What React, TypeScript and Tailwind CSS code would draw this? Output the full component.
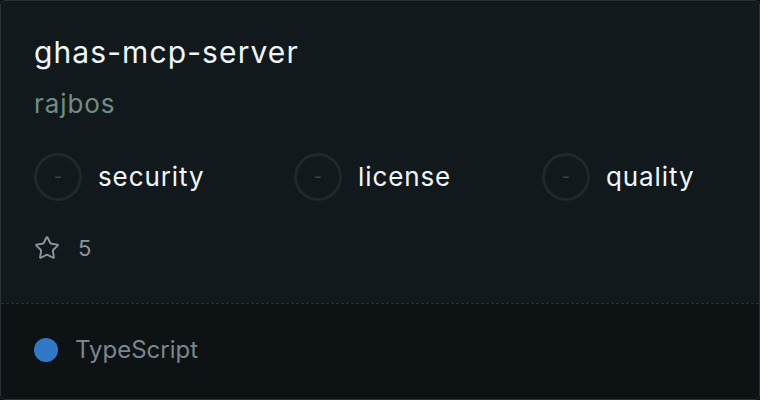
import { Star } from 'lucide-react';

const CHECKS = [
  { label: 'security', width: 'w-[260px]' },
  { label: 'license', width: 'w-[248px]' },
  { label: 'quality', width: '' },
];

export default function App() {
  return (
    <div className="w-[760px] h-[400px] bg-[#0d1215] font-['Inter','Liberation_Sans',sans-serif]">
      <div className="w-full h-full flex flex-col border border-[#2b3236] rounded-[6px] overflow-hidden">
        {/* Header */}
        <div className="flex-1 bg-[#12191c] px-[33px] pt-[33px]">
          <h1 className="text-[30px] leading-[36px] tracking-[1.1px] text-[#f0f6fc]">ghas-mcp-server</h1>
          <p className="mt-[18px] text-[26px] leading-[31px] tracking-[0.9px] text-[#6f8d87]">rajbos</p>

          {/* Checks */}
          <div className="mt-[34px] flex items-center">
            {CHECKS.map(c => (
              <div key={c.label} className={`flex items-center ${c.width}`}>
                <div className="w-[48px] h-[48px] rounded-full border-[3px] border-[#20272b] flex items-center justify-center">
                  <span className="text-[18px] leading-none text-[#3b4448]">-</span>
                </div>
                <span className="ml-[16px] text-[26px] leading-[32px] tracking-[0.9px] text-[#f0f6fc]">{c.label}</span>
              </div>
            ))}
          </div>

          {/* Stars */}
          <div className="mt-[34px] flex items-center h-[26px]">
            <Star className="w-[26px] h-[26px] text-[#8b949e]" strokeWidth={1.8} />
            <span className="ml-[18px] text-[22px] leading-none text-[#8b949e]">5</span>
          </div>
        </div>

        {/* Footer */}
        <div className="h-[96px] border-t border-dashed border-[#2b3236] bg-[#0d1215] px-[33px] pb-[3px] flex items-center">
          <span className="w-[24px] h-[24px] rounded-full bg-[#3178c6]" />
          <span className="ml-[17px] text-[24px] leading-none text-[#7d858c]">TypeScript</span>
        </div>
      </div>
    </div>
  );
}
